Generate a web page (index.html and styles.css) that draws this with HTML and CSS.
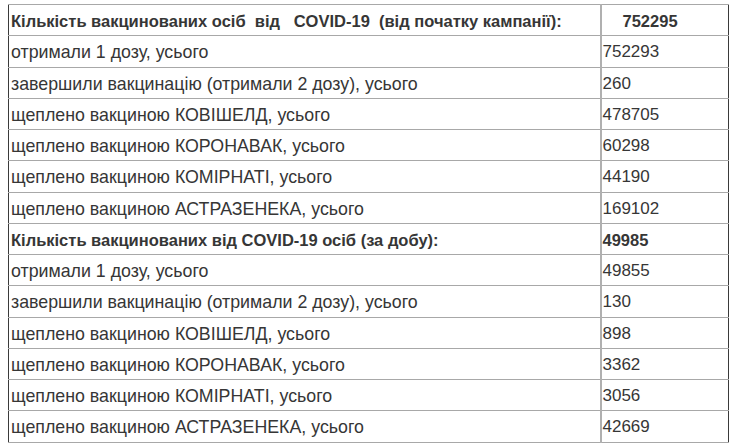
FILE: index.html
```html
<!DOCTYPE html>
<html lang="uk">
<head>
<meta charset="utf-8">
<link rel="stylesheet" href="styles.css">
</head>
<body>
<table class="stats">
  <colgroup><col class="c-label"><col class="c-value"></colgroup>
  <tr class="head"><td class="label">Кількість вакцинованих осіб  від   COVID-19  (від початку кампанії):</td><td class="value indent">752295</td></tr>
  <tr><td class="label">отримали 1 дозу, усього</td><td class="value">752293</td></tr>
  <tr><td class="label">завершили вакцинацію (отримали 2 дозу), усього</td><td class="value">260</td></tr>
  <tr><td class="label">щеплено вакциною КОВІШЕЛД, усього</td><td class="value">478705</td></tr>
  <tr><td class="label">щеплено вакциною КОРОНАВАК, усього</td><td class="value">60298</td></tr>
  <tr><td class="label">щеплено вакциною КОМІРНАТІ, усього</td><td class="value">44190</td></tr>
  <tr><td class="label">щеплено вакциною АСТРАЗЕНЕКА, усього</td><td class="value">169102</td></tr>
  <tr class="head"><td class="label">Кількість вакцинованих від COVID-19 осіб (за добу):</td><td class="value">49985</td></tr>
  <tr><td class="label">отримали 1 дозу, усього</td><td class="value">49855</td></tr>
  <tr><td class="label">завершили вакцинацію (отримали 2 дозу), усього</td><td class="value">130</td></tr>
  <tr><td class="label">щеплено вакциною КОВІШЕЛД, усього</td><td class="value">898</td></tr>
  <tr><td class="label">щеплено вакциною КОРОНАВАК, усього</td><td class="value">3362</td></tr>
  <tr><td class="label">щеплено вакциною КОМІРНАТІ, усього</td><td class="value">3056</td></tr>
  <tr><td class="label">щеплено вакциною АСТРАЗЕНЕКА, усього</td><td class="value">42669</td></tr>
</table>
</body>
</html>
```
FILE: styles.css
```css
html, body {
  margin: 0;
  padding: 0;
  background: #ffffff;
}
body {
  padding: 4px 0 0 8px;
  font-family: "Liberation Sans", Arial, sans-serif;
  font-size: 17.8px;
  color: #363636;
}
.stats {
  border-collapse: collapse;
  table-layout: fixed;
  width: 720px;
  border: 1px solid #3a3a3a;
}
.c-label { width: 592px; }
.c-value { width: 128px; }
.stats tr { height: 31.25px; }
.stats td {
  padding: 2px 0 0 2px;
  border-top: 1px solid #a8a8a8;
  border-bottom: 1px solid #a8a8a8;
  vertical-align: middle;
  white-space: pre;
  overflow: hidden;
  line-height: 20px;
}
.stats td.value {
  font-size: 17px;
  border-left: 2px solid #b0b0b0;
  padding-left: 1px;
}
.head td {
  font-weight: bold;
  font-size: 16.5px;
}
.stats .head td.value { font-size: 16.5px; }
.stats td.indent { padding-left: 21px; }
```
